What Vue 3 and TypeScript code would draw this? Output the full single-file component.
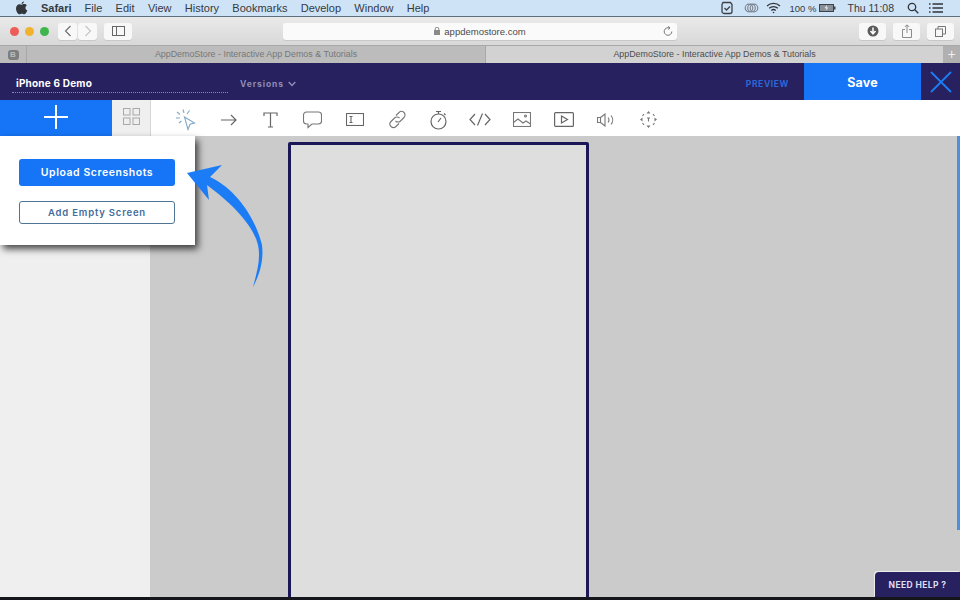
<script setup lang="ts">
const menus: string[] = ['File', 'Edit', 'View', 'History', 'Bookmarks', 'Develop', 'Window', 'Help']
const tabTitle = 'AppDemoStore - Interactive App Demos & Tutorials'
</script>

<template>
  <div class="page">
    <div class="menubar">
      <svg class="apple" width="13" height="14" viewBox="0 0 13 14"><path d="M9 .5C8.900 1.800 7.800 3 6.500 3 6.500 1.800 7.700.6 9 .5ZM6.600 3.700c.7 0 1.500-.6 2.600-.6 1 0 2 .5 2.600 1.400-2 1.200-1.700 4 .5 4.900-.6 1.500-1.800 3.900-3.100 3.900-.9 0-1.200-.6-2.300-.6s-1.500.6-2.400.6C2.900 13.300 1 10.200 1 7.500 1 4.800 2.700 3.200 4.400 3.200c1 0 1.600.5 2.200.5Z" fill="#33373c"/></svg>
      <span class="m-app">Safari</span>
      <span v-for="m in menus" :key="m" class="m-item">{{ m }}</span>
      <div class="m-right">
        <svg width="14" height="14" viewBox="0 0 14 14" fill="none" stroke="#3b4047" stroke-width="1.300"><path d="M3 1.500h7.500l1.500 2v7a2 2 0 0 1-2 2H4a2 2 0 0 1-2-2v-7Z"/><path d="M4.500 7l2 2 3.500-3.500"/></svg>
        <svg class="cc" width="15" height="12" viewBox="0 0 15 12" fill="none" stroke="#7d8791" stroke-width="1.200"><circle cx="5" cy="6" r="3.800"/><circle cx="7.500" cy="6" r="3.800"/><circle cx="10" cy="6" r="3.800"/></svg>
        <svg class="wifi" width="15" height="12" viewBox="0 0 15 12" fill="none" stroke="#30353b" stroke-width="1.300"><path d="M1 4a9.500 9.500 0 0 1 13 0M3.200 6.300a6.300 6.300 0 0 1 8.600 0M5.300 8.500a3.200 3.200 0 0 1 4.400 0"/><circle cx="7.500" cy="10.500" r=".8" fill="#30353b" stroke="none"/></svg>
        <span class="pct">100 %</span>
        <svg class="batt" width="17" height="8" viewBox="0 0 17 8"><rect x=".5" y=".5" width="14" height="7" fill="#8a9098" stroke="#3d4248"/><rect x="15" y="2.500" width="1.500" height="3" fill="#3d4248"/><path d="M8 1L5.500 4.300H7.500L6.500 7 9.500 3.600H7.600Z" fill="#e6eef6"/></svg>
        <span class="clock">Thu 11:08</span>
        <svg class="search" width="12" height="12" viewBox="0 0 12 12" fill="none" stroke="#30353b" stroke-width="1.300"><circle cx="5" cy="5" r="3.700"/><path d="M7.800 7.800l3.500 3.500"/></svg>
        <svg class="list" width="14" height="10" viewBox="0 0 14 10" fill="none" stroke="#30353b" stroke-width="1.300"><path d="M0 1h1.500M3.500 1H14M0 5h1.500M3.500 5H14M0 9h1.500M3.500 9H14"/></svg>
      </div>
    </div>

    <div class="chrome">
      <div class="lights"><i class="red"></i><i class="yellow"></i><i class="green"></i></div>
      <div class="nav-pair">
        <button class="c-btn nav"><svg width="8" height="12" viewBox="0 0 8 12" fill="none" stroke="#6c6c6c" stroke-width="1.100"><path d="M6.500 1L1.500 6l5 5"/></svg></button>
        <button class="c-btn nav"><svg width="8" height="12" viewBox="0 0 8 12" fill="none" stroke="#c3c3c3" stroke-width="1.100"><path d="M1.500 1l5 5-5 5"/></svg></button>
      </div>
      <button class="c-btn side"><svg width="13" height="10" viewBox="0 0 13 10" fill="none" stroke="#666" stroke-width="1"><rect x=".5" y=".5" width="12" height="9"/><path d="M4.500 .5v9"/></svg></button>
      <div class="url">
        <svg width="6" height="8" viewBox="0 0 6 8"><rect y="3" width="6" height="5" fill="#8a8a8a"/><path d="M1.200 3.500V2a1.800 1.800 0 0 1 3.600 0v1.500" fill="none" stroke="#8a8a8a"/></svg>
        <span>appdemostore.com</span>
        <svg class="reload" width="10" height="11" viewBox="0 0 10 11" fill="none" stroke="#777" stroke-width="1"><path d="M6.500 2A3.800 3.800 0 1 0 8.800 5.500"/><path d="M5.200.3L7 2 5.200 3.500"/></svg>
      </div>
      <div class="c-right">
        <button class="c-btn act"><svg width="12" height="12" viewBox="0 0 12 12"><circle cx="6" cy="6" r="5.500" fill="#5b5b5b"/><path d="M6 2.500V8M3.500 6L6 8.800 8.500 6" fill="none" stroke="#fff" stroke-width="1.500"/></svg></button>
        <button class="c-btn act"><svg width="10" height="14" viewBox="0 0 10 14" fill="none" stroke="#8a8a8a"><path d="M3 5.500H.5v8h9v-8H7M5 9V1M2.800 3L5 .8 7.200 3"/></svg></button>
        <button class="c-btn act"><svg width="11" height="11" viewBox="0 0 11 11" fill="none" stroke="#777"><rect x=".5" y="3" width="7" height="7.500"/><path d="M3 3V.5h7.500V8H7.500"/></svg></button>
      </div>
    </div>

    <div class="tabs">
      <div class="fav"><span>B</span></div>
      <div class="tab inactive">{{ tabTitle }}</div>
      <div class="tab active">{{ tabTitle }}</div>
      <div class="newtab">+</div>
    </div>

    <header class="appbar">
      <div class="project">iPhone 6 Demo</div>
      <div class="versions">Versions <svg width="8" height="6" viewBox="0 0 8 6" fill="none" stroke="#8f8cb5" stroke-width="1.500"><path d="M.7 1l3.300 3.500L7.300 1"/></svg></div>
      <div class="preview">PREVIEW</div>
      <button class="save">Save</button>
      <button class="close"><svg width="24" height="24" viewBox="0 0 24 24" fill="none" stroke="#1c7cf5" stroke-width="1.800"><path d="M2 2l20 20M22 2L2 22"/></svg></button>
    </header>

    <div class="toolbar">
      <button class="add"><svg width="24" height="24" viewBox="0 0 24 24" stroke="#fff" stroke-width="2"><path d="M12 0v24M0 12h24"/></svg></button>
      <button class="grid"><svg width="17" height="17" viewBox="0 0 17 17" fill="none" stroke="#a9a9a9"><rect x=".5" y=".5" width="6.500" height="6.500"/><rect x="10" y=".5" width="6.500" height="6.500"/><rect x=".5" y="10" width="6.500" height="6.500"/><rect x="10" y="10" width="6.500" height="6.500"/></svg></button>
      <div class="tools">
        <svg class="t-cursor" width="21" height="22" viewBox="0 0 21 22" fill="none" stroke="#7fa8c9" stroke-width="1.100"><path d="M8.500 8l10 6-4.500 1.200L12 20.500Z"/><path d="M7 .5l1 3.500M1 3l3 2.500M0 9h4M13.500 1.500L11 5M3 14l2.500-2"/></svg>
        <svg class="t-arrow" width="16" height="12" viewBox="0 0 16 12" fill="none" stroke="#666" stroke-width="1.200"><path d="M0 6h15M10 1l5 5-5 5"/></svg>
        <svg class="t-text" width="15" height="16" viewBox="0 0 15 16" fill="none" stroke="#666" stroke-width="1.200"><path d="M1 4V1h13v3M7.500 1v14M5 15h5"/></svg>
        <svg class="t-bubble" width="19" height="18" viewBox="0 0 19 18" fill="none" stroke="#777" stroke-width="1.100"><path d="M3.500 1h12a3 3 0 0 1 3 3v6a3 3 0 0 1-3 3H9l-4 3.500V13H3.500a3 3 0 0 1-3-3V4a3 3 0 0 1 3-3Z"/></svg>
        <svg class="t-input" width="18" height="13" viewBox="0 0 18 13" fill="none" stroke="#666" stroke-width="1.100"><rect x=".5" y=".5" width="17" height="12"/><path d="M3.500 3.500h3M3.500 9.500h3M5 3.500v6"/></svg>
        <svg class="t-link" width="19" height="19" viewBox="0 0 19 19" fill="none" stroke="#777" stroke-width="1.100"><path d="M8 5.500l3-3a3.500 3.500 0 0 1 5 5l-3.500 3.500a3.500 3.500 0 0 1-5 0"/><path d="M11 13.500l-3 3a3.500 3.500 0 0 1-5-5l3.500-3.500a3.500 3.500 0 0 1 5 0"/></svg>
        <svg class="t-timer" width="17" height="20" viewBox="0 0 17 20" fill="none" stroke="#666" stroke-width="1.200"><circle cx="8.500" cy="11.500" r="7.500"/><path d="M6 1.500h5M8.500 1.500V4M14 3.500l1.500 1.500M8 12l3-4"/></svg>
        <svg class="t-code" width="22" height="13" viewBox="0 0 22 13" fill="none" stroke="#666" stroke-width="1.200"><path d="M6 1L1 6.500 6 12M16 1l5 5.500L16 12M13.500 .5L8.500 12.500"/></svg>
        <svg class="t-img" width="18" height="15" viewBox="0 0 18 15" fill="none" stroke="#777" stroke-width="1.100"><rect x=".5" y=".5" width="17" height="14"/><path d="M.5 10.500l4.500-3.500 5 4 3-2 4.500 3"/><circle cx="12.500" cy="4" r="1"/></svg>
        <svg class="t-video" width="20" height="15" viewBox="0 0 20 15" fill="none" stroke="#666" stroke-width="1.200"><rect x=".6" y=".6" width="18.800" height="13.800" rx="1"/><path d="M7.500 4l6 3.500-6 3.500Z"/></svg>
        <svg class="t-sound" width="19" height="14" viewBox="0 0 19 14" fill="none" stroke="#777" stroke-width="1.100"><path d="M.5 4.500h3v5h-3ZM3.500 4.500L8 1v12L3.500 9.500M11 4.500a4 4 0 0 1 0 5M14 2.500a7 7 0 0 1 0 9"/></svg>
        <svg class="t-move" width="17" height="17" viewBox="0 0 17 17"><path d="M8.500 0l2 2.500h-4ZM8.500 17l2-2.500h-4ZM0 8.500l2.500-2v4ZM17 8.500l-2.500-2v4Z" fill="#777"/><path d="M2.500 5l1.500-2M13 3l1.500 2M2.500 12l1.500 2M13 14l1.500-2M7 7h3M8.500 7v3.500" fill="none" stroke="#777" stroke-width="1.100"/></svg>
      </div>
    </div>

    <main class="work">
      <aside class="sidebar"></aside>
      <section class="canvas">
        <div class="device"></div>
        <div class="scroll"></div>
      </section>

      <div class="popover">
        <button class="upload">Upload Screenshots</button>
        <button class="empty">Add Empty Screen</button>
      </div>
      <svg class="callout" width="80" height="126" viewBox="0 0 80 126"><path d="M2 9L37 1 25 13C45 22 68 46 77 81 79 97 74 112 68 123 72 108 76 95 73 81 68 60 45 38 22 21L24 36Z" fill="#1c7cf5"/></svg>
      <button class="help">NEED HELP ?</button>
    </main>
    <div class="edge"></div>
  </div>
</template>

<style scoped>
.page { width: 960px; height: 600px; overflow: hidden; display: flex; flex-direction: column; position: relative; font-family: "Liberation Sans", Arial, sans-serif; }
button { border: 0; padding: 0; margin: 0; font: inherit; cursor: pointer; }
svg { display: block; flex: none; }

.menubar { height: 17px; flex: none; box-sizing: border-box; background: #cfe3f7; display: flex; align-items: center; font-size: 11px; color: #353a40; padding-left: 15px; border-bottom: 1px solid #5f6f7d; }
.apple { margin-right: 13px; }
.m-app { font-weight: 700; margin-right: 13px; }
.m-item { margin-right: 13.300px; }
.m-right { margin-left: auto; display: flex; align-items: center; padding-right: 17px; }
.cc { margin-left: 10px; }
.wifi { margin-left: 7px; }
.pct { margin-left: 9px; font-size: 9.500px; }
.batt { margin-left: 3px; }
.clock { margin-left: 11px; font-size: 10.500px; }
.search { margin-left: 13px; }
.list { margin-left: 10px; }

.chrome { height: 28px; flex: none; background: linear-gradient(#eaeaea, #d8d8d8); display: flex; align-items: center; padding: 0 6px 0 10px; position: relative; }
.lights { display: flex; gap: 6px; margin-right: 9px; }
.lights i { width: 9px; height: 9px; border-radius: 50%; display: block; }
.red { background: #ee5c57; }
.yellow { background: #f0b32f; }
.green { background: #3fb64b; }
.c-btn { background: #f8f8f8; border-radius: 3px; height: 17px; display: flex; align-items: center; justify-content: center; box-shadow: 0 1px 0 #c8c8c8; }
.nav-pair { display: flex; gap: 1px; margin-right: 7px; }
.nav { width: 19px; }
.side { width: 28px; }
.url { position: absolute; left: 283px; width: 394px; height: 17px; background: #fafafa; border-radius: 3px; box-shadow: 0 1px 0 #c8c8c8; display: flex; align-items: center; justify-content: center; gap: 4px; font-size: 9.500px; color: #4a4a4a; }
.reload { position: absolute; right: 4px; }
.c-right { margin-left: auto; display: flex; gap: 7px; }
.act { width: 27px; }

.tabs { height: 18px; flex: none; display: flex; background: #bcbcbc; font-size: 8.900px; color: #777; border-top: 1px solid #a8a8a8; box-sizing: border-box; }
.fav { width: 27px; flex: none; display: flex; align-items: center; justify-content: center; border-right: 1px solid #a8a8a8; box-sizing: border-box; }
.fav span { width: 11px; height: 10px; border-radius: 3px; background: #7e7e7e; color: #bcbcbc; font-size: 8px; line-height: 10px; text-align: center; font-weight: 700; }
.tab { display: flex; align-items: center; justify-content: center; padding-bottom: 1px; box-sizing: border-box; }
.inactive { width: 458px; flex: none; }
.active { flex: 1; background: #d2d2d2; color: #4d4d4d; border-left: 1px solid #a8a8a8; }
.newtab { width: 17px; flex: none; background: #b0b0b0; color: #eee; font-size: 14px; line-height: 17px; text-align: center; }

.appbar { height: 37px; flex: none; background: #27215f; display: flex; align-items: stretch; font-family: Inter, "Liberation Sans", sans-serif; }
.project { width: 216px; margin: 14px 0 7px 12px; padding-left: 4px; box-sizing: border-box; height: 16px; line-height: 13px; color: #fff; font-size: 10px; font-weight: 700; letter-spacing: .2px; border-bottom: 1px dotted #8c89ae; flex: none; }
.versions { margin-left: 12px; color: #8f8cb5; font-size: 8.500px; font-weight: 700; letter-spacing: .9px; display: flex; align-items: center; gap: 4px; padding-top: 4px; }
.preview { margin-left: auto; color: #2b67d6; font-size: 8.500px; font-weight: 700; letter-spacing: .6px; align-self: center; margin-right: 15px; padding-top: 4px; }
.save { width: 117px; background: #1575f6; color: #fff; font-size: 12.500px; font-weight: 700; letter-spacing: .2px; padding-top: 2px; }
.close { width: 39px; background: #27215f; display: flex; align-items: center; justify-content: center; }

.toolbar { height: 36px; flex: none; background: #fff; display: flex; }
.add { width: 112px; background: #1575f6; display: flex; align-items: center; justify-content: center; padding-bottom: 2px; box-sizing: border-box; }
.grid { width: 39px; background: #efefef; border-right: 1px solid #d5d5d5; box-sizing: border-box; display: flex; align-items: center; justify-content: center; padding-bottom: 4px; }
.tools { flex: 1; display: flex; align-items: center; padding: 3px 0 0 25px; box-sizing: border-box; }
.t-arrow { margin-left: 24px; }
.t-text { margin-left: 26px; }
.t-bubble { margin-left: 25px; }
.t-input { margin-left: 24px; }
.t-link { margin-left: 24px; }
.t-timer { margin-left: 23px; }
.t-code { margin-left: 22px; }
.t-img { margin-left: 22px; }
.t-video { margin-left: 23px; }
.t-sound { margin-left: 23px; }
.t-move { margin-left: 24px; }

.work { flex: 1; display: flex; position: relative; min-height: 0; }
.sidebar { width: 150px; flex: none; background: #efefef; }
.canvas { flex: 1; background: #cbcbcb; display: flex; position: relative; padding: 6px 0 0 138px; }
.device { width: 301px; box-sizing: border-box; background: #dedede; border: 3px solid #1b1756; border-radius: 2px 2px 0 0; }
.scroll { position: absolute; right: 0; top: 0; width: 3px; height: 394px; background: #4f8fdc; }

.popover { position: absolute; left: 0; top: 0; width: 195px; height: 109px; background: #fff; box-shadow: 3px 4px 7px rgba(0,0,0,.7); display: flex; flex-direction: column; align-items: flex-start; padding: 23px 0 0 19px; box-sizing: border-box; font-family: Inter, "Liberation Sans", sans-serif; }
.upload { width: 156px; height: 27px; border-radius: 3px; background: #1575f6; color: #fff; font-size: 10.500px; font-weight: 600; letter-spacing: .55px; }
.empty { width: 156px; height: 23px; margin-top: 15px; border-radius: 3px; background: #fff; border: 1px solid #4e7596; box-sizing: border-box; color: #3f6d9c; font-size: 9.500px; font-weight: 600; letter-spacing: .8px; }
.callout { position: absolute; left: 185px; top: 28px; }
.help { position: absolute; right: 0; bottom: 3px; width: 85px; height: 25px; background: #27215f; color: #dedcf0; border-radius: 4px 0 0 0; font-family: Inter, "Liberation Sans", sans-serif; font-size: 8.500px; font-weight: 700; letter-spacing: .4px; box-shadow: -1px -1px 0 #eee; }
.edge { position: absolute; left: 0; right: 0; bottom: 0; height: 3px; background: #15151c; }
</style>
